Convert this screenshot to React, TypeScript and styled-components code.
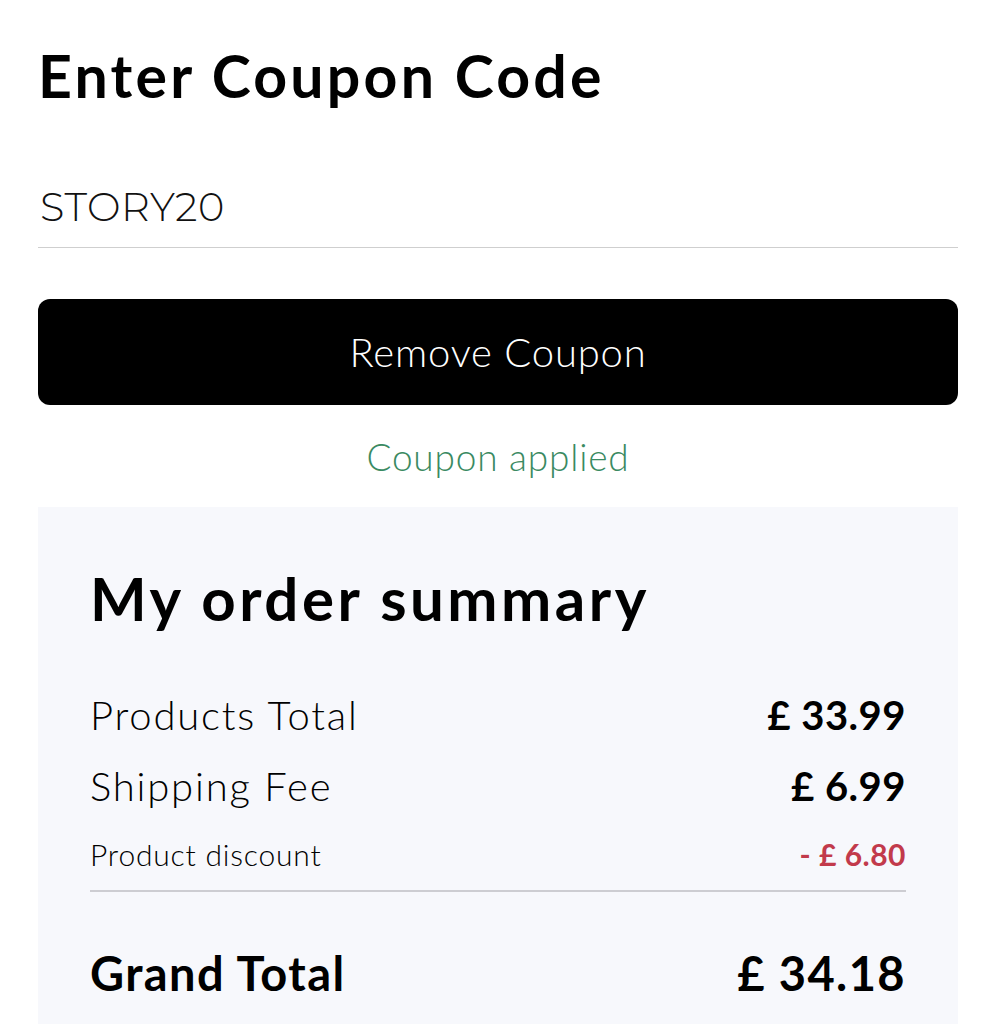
import React, { useState } from 'react';
import styled, { createGlobalStyle } from 'styled-components';

const GlobalStyle = createGlobalStyle`
  html, body {
    margin: 0;
    padding: 0;
    background: #ffffff;
  }
  body {
    font-family: Lato, "Noto Sans", sans-serif;
    color: #000;
  }
`;

const Page = styled.div`
  width: 996px;
  padding: 0 38px;
  box-sizing: border-box;
`;

const Titulo = styled.h1`
  font-size: 59px;
  font-weight: 700;
  margin: 0;
  padding-top: 42px;
  line-height: 68px;
  letter-spacing: 3.2px;
`;

const CampoCupom = styled.input`
  display: block;
  width: 100%;
  box-sizing: border-box;
  margin-top: 72px;
  padding: 0 2px 16px;
  border: none;
  border-bottom: 1.5px solid #cfcfcf;
  background: transparent;
  font-family: Montserrat, "Noto Sans", sans-serif;
  font-size: 40px;
  font-weight: 300;
  letter-spacing: 0.5px;
  color: #111;
  outline: none;
`;

const BotaoCupom = styled.button`
  display: block;
  width: 100%;
  height: 106px;
  margin-top: 51px;
  border: none;
  border-radius: 12px;
  background: #000;
  color: #fff;
  font-family: Lato, "Noto Sans", sans-serif;
  font-size: 40px;
  font-weight: 300;
  letter-spacing: 0.8px;
  cursor: pointer;
`;

const Mensagem = styled.p`
  margin: 29px 0 0;
  text-align: center;
  color: #3a8a62;
  font-size: 37px;
  font-weight: 300;
  line-height: 46px;
  letter-spacing: 0.8px;
`;

const Resumo = styled.section`
  margin-top: 27px;
  background: #f7f8fc;
  padding: 56px 52px 40px;
`;

const TituloResumo = styled.h2`
  margin: 0 0 46px;
  font-size: 60px;
  font-weight: 700;
  line-height: 70px;
  letter-spacing: 3.5px;
`;

const Linha = styled.div<{ $small?: boolean }>`
  display: flex;
  justify-content: space-between;
  align-items: center;
  height: ${({ $small }) => ($small ? '65px' : '71px')};
  font-size: ${({ $small }) => ($small ? '30px' : '40px')};
  letter-spacing: ${({ $small }) => ($small ? '0.8px' : '1.8px')};
`;

const Rotulo = styled.span`
  font-weight: 300;
`;

const Valor = styled.span<{ $negative?: boolean }>`
  font-weight: 700;
  letter-spacing: 0.5px;
  color: ${({ $negative }) => ($negative ? '#c23a4b' : '#000')};
`;

const Divisor = styled.hr`
  border: none;
  border-top: 2px solid #cdcdd2;
  margin: 4px 0 0;
`;

const LinhaTotal = styled.div`
  display: flex;
  justify-content: space-between;
  align-items: center;
  margin-top: 53px;
  font-size: 47px;
  font-weight: 700;
  letter-spacing: 1.4px;
`;

const App: React.FC = () => {
  const [cupom, setCupom] = useState('STORY20');

  return (
    <>
      <GlobalStyle />
      <Page>
        <Titulo>Enter Coupon Code</Titulo>
        <CampoCupom value={cupom} onChange={(e) => setCupom(e.target.value)} />
        <BotaoCupom onClick={() => setCupom('')}>Remove Coupon</BotaoCupom>
        <Mensagem>Coupon applied</Mensagem>
        <Resumo>
          <TituloResumo>My order summary</TituloResumo>
          <Linha>
            <Rotulo>Products Total</Rotulo>
            <Valor>£ 33.99</Valor>
          </Linha>
          <Linha>
            <Rotulo>Shipping Fee</Rotulo>
            <Valor>£ 6.99</Valor>
          </Linha>
          <Linha $small>
            <Rotulo>Product discount</Rotulo>
            <Valor $negative>- £ 6.80</Valor>
          </Linha>
          <Divisor />
          <LinhaTotal>
            <span>Grand Total</span>
            <span>£ 34.18</span>
          </LinhaTotal>
        </Resumo>
      </Page>
    </>
  );
};

export default App;
